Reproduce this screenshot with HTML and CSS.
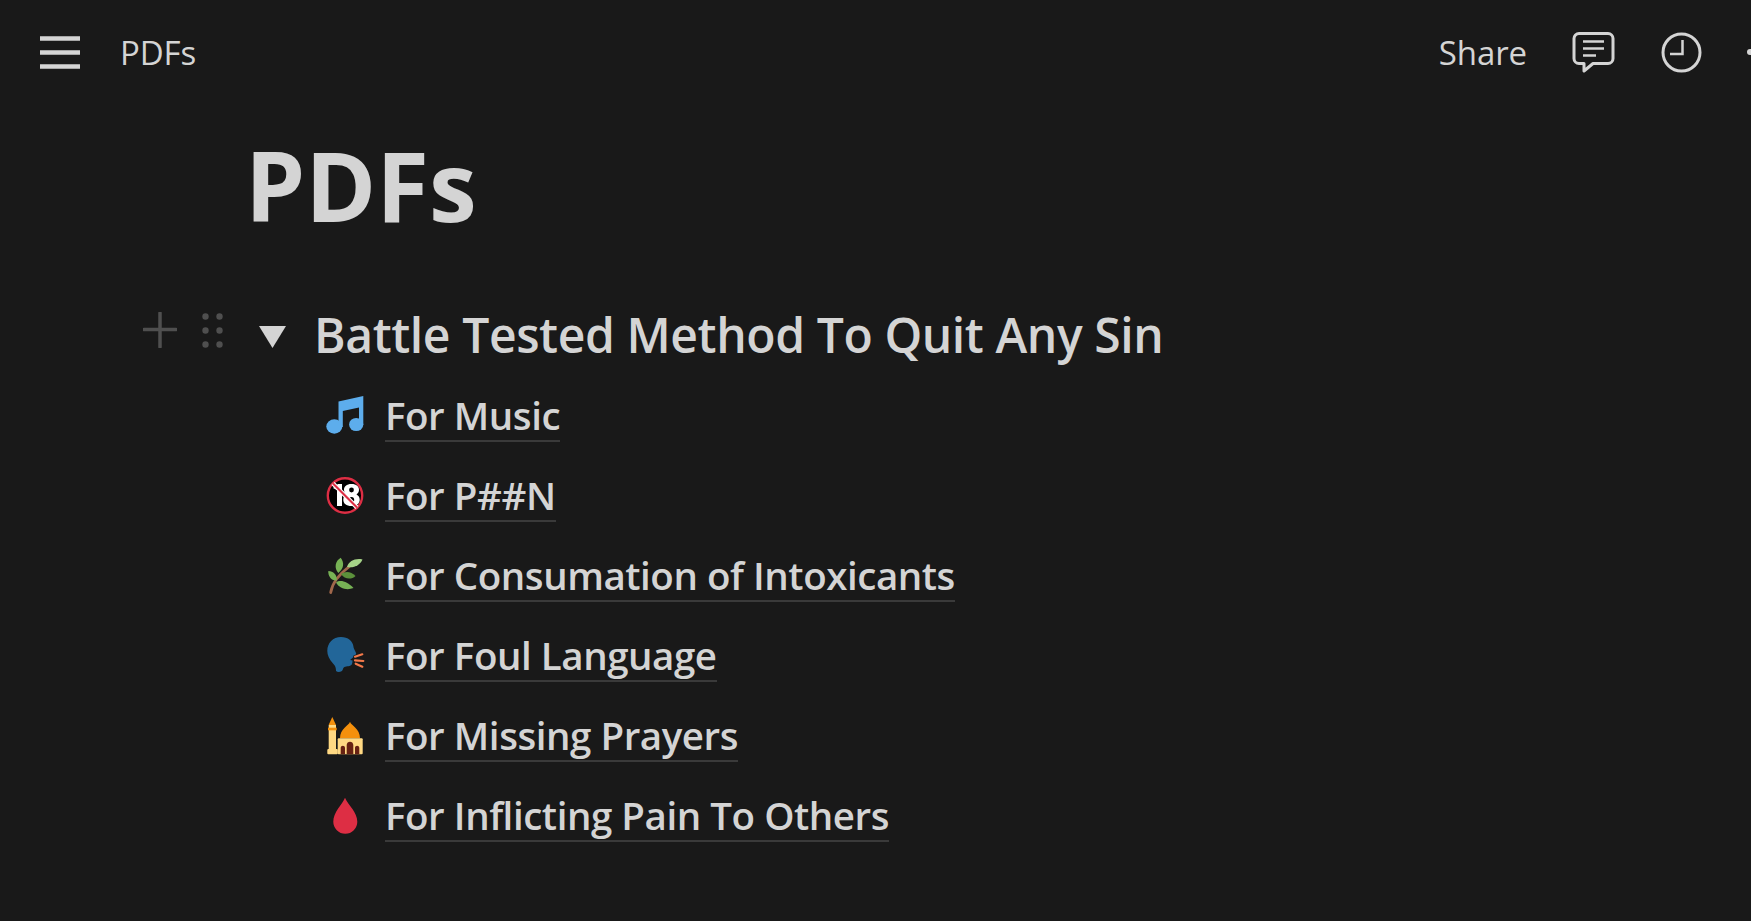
FILE: index.html

```html
<!DOCTYPE html>
<html lang="en">
<head>
    <meta charset="UTF-8">
    <meta name="viewport" content="width=device-width, initial-scale=1.0">
    <title>PDFs</title>
    <link rel="stylesheet" href="styles.css">
</head>
<body>
    <header class="topbar">
        <div class="topbar-left">
            <svg class="menu-icon" width="40" height="33" viewBox="0 0 40 33"><path d="M0 2.500h40M0 16.500h40M0 30.500h40" stroke="#d4d4d4" stroke-width="4.500"/></svg>
            <span class="crumb">PDFs</span>
        </div>
        <div class="topbar-right">
            <span class="share">Share</span>
            <svg class="comment-icon" width="43" height="41" viewBox="0 0 43 41" fill="none" stroke="#d4d4d4"><path d="M7 1.500h29a5 5 0 0 1 5 5v20a5 5 0 0 1-5 5H21l-9 7.500v-7.500H7a5 5 0 0 1-5-5v-20a5 5 0 0 1 5-5z" stroke-width="3" stroke-linejoin="round"/><path d="M11 9.500h21M11 16.500h21M11 23.500h13" stroke-width="2.500"/></svg>
            <svg class="clock-icon" width="41" height="41" viewBox="0 0 41 41" fill="none" stroke="#d4d4d4"><circle cx="20.500" cy="20.500" r="18.500" stroke-width="3"/><path d="M21.500 8v14H9" stroke-width="2.500"/></svg>
            <svg class="more-icon" width="10" height="8" viewBox="0 0 10 8"><circle cx="4" cy="4" r="3" fill="#d4d4d4"/></svg>
        </div>
    </header>

    <main class="page">
        <h1 class="page-title">PDFs</h1>

        <div class="toggle-head">
            <svg class="plus-icon" width="34" height="36" viewBox="0 0 34 36"><path d="M17 1v34M1 17.500h32" stroke="#4f4f4f" stroke-width="3.500" stroke-linecap="round"/></svg>
            <svg class="drag-icon" width="21" height="35" viewBox="0 0 21 35" fill="#4f4f4f"><circle cx="3.500" cy="3.500" r="3.200"/><circle cx="17.500" cy="3.500" r="3.200"/><circle cx="3.500" cy="17.500" r="3.200"/><circle cx="17.500" cy="17.500" r="3.200"/><circle cx="3.500" cy="31.500" r="3.200"/><circle cx="17.500" cy="31.500" r="3.200"/></svg>
            <svg class="toggle-icon" width="27" height="22" viewBox="0 0 27 22"><path d="M0 0h27L13.500 22z" fill="#d4d4d4"/></svg>
            <h2 class="toggle-title">Battle Tested Method To Quit Any Sin</h2>
        </div>

        <ul class="pages">
            <li class="page-link">
                <svg class="emoji" width="40" height="40" viewBox="0 0 40 40" fill="#5dadec"><path d="M13.500 5.500 38.300 0v29H34V11.500L17.800 15v16h-4.300z"/><ellipse cx="9.300" cy="30.500" rx="8" ry="7.200"/><ellipse cx="31.200" cy="28.500" rx="7.100" ry="6.600"/></svg>
                <a class="link-text">For Music</a>
            </li>
            <li class="page-link">
                <svg class="emoji" width="40" height="40" viewBox="0 0 40 40"><circle cx="20" cy="19.500" r="17.200" fill="#000" stroke="#dd2e44" stroke-width="2.400"/><path d="M8 12l5-4h4v22h-5V14z" fill="#fff"/><path d="M26.500 8c-5 0-7.500 2.500-7.500 5.800 0 2.200 1 3.700 2.500 4.700-2 1-3.200 2.800-3.200 5.200 0 3.800 3 6.300 8.200 6.300s8.200-2.500 8.200-6.300c0-2.400-1.200-4.200-3.200-5.200 1.500-1 2.500-2.500 2.500-4.700C34 10.500 31.500 8 26.500 8z" fill="#fff"/><ellipse cx="26.500" cy="14" rx="2.400" ry="2.400" fill="#000"/><ellipse cx="26.500" cy="24" rx="2.700" ry="3" fill="#000"/><path d="M8 7.500l24 24" stroke="#fff" stroke-width="4.500"/><path d="M8 7.500l24 24" stroke="#dd2e44" stroke-width="2.200"/></svg>
                <a class="link-text">For P##N</a>
            </li>
            <li class="page-link">
                <svg class="emoji" width="40" height="40" viewBox="0 0 40 40"><path d="M5.700 36.500C7 28 13 19 25 10" fill="none" stroke="#a0674b" stroke-width="2.800" stroke-linecap="round"/><path d="M13.300 17C9 12 10 5 15.700 1.700c4 5 3 11-2.400 15.300z" fill="#77b255"/><path d="M22 11c2-6 8-9 15.500-7.500C35 9 29 12.500 22 11z" fill="#a6d388"/><path d="M16 18c4-3 10-3 14.500 2-4 4-11 3.500-14.500-2z" fill="#5c913b"/><path d="M11 26.500c4-3 11-1.500 17.500 5.500-6 2.500-14 1-17.500-5.500z" fill="#77b255"/><path d="M11.800 24.500C6 25 3 20 3.300 15c5 0 9 4 8.500 9.500z" fill="#77b255"/></svg>
                <a class="link-text">For Consumation of Intoxicants</a>
            </li>
            <li class="page-link">
                <svg class="emoji" width="40" height="40" viewBox="0 0 40 40"><path d="M16 1c7 0 12 4 12.500 10 .2 2 3 6 2.700 7-.3 1-2 1-2.700 1.500l-.5 2-3 2.500 2.500.5c0 3-.5 5-3 5.500-3 .5-6 .5-6.500 3-.5 3-5 4-7 2 0-3-.5-5-3-7.500C4 23 2.300 19 2.300 15 2.300 7 8 1 16 1z" fill="#226699"/><path d="M30 20.700l7.300-2.400M30 24.300l8.300.7M30.700 27.700l6.600 3" stroke="#f4794a" stroke-width="2.200" stroke-linecap="round" fill="none"/></svg>
                <a class="link-text">For Foul Language</a>
            </li>
            <li class="page-link">
                <svg class="emoji" width="40" height="40" viewBox="0 0 40 40"><path d="M7.300 1l3.700 8H3.600z" fill="#f4900c"/><rect x="3.700" y="9" width="7.300" height="25" fill="#ffd983"/><rect x="2.300" y="33" width="10.500" height="5.300" rx="1" fill="#ffd983"/><rect x="3" y="11.700" width="8.700" height="2.600" fill="#f4900c"/><path d="M25 5.700c1 4 10 6.500 10 16.600H15C15 12.200 24 9.700 25 5.700z" fill="#f4900c"/><rect x="12.700" y="22.300" width="25" height="16" rx="1" fill="#ffd983"/><path d="M21.700 38.300V29c0-4.500 6.600-4.500 6.600 0v9.300zM15.700 38.300V32c0-3 4.300-3 4.300 0v6.300zM30 38.300V32c0-3 4.300-3 4.300 0v6.300z" fill="#662113"/></svg>
                <a class="link-text">For Missing Prayers</a>
            </li>
            <li class="page-link">
                <svg class="emoji" width="40" height="40" viewBox="0 0 40 40"><path d="M20 1.700C23 9 32.300 16 32.300 25.700a12 12 0 0 1-24 0C8.300 16 17 9 20 1.700z" fill="#dd2e44"/></svg>
                <a class="link-text">For Inflicting Pain To Others</a>
            </li>
        </ul>
    </main>
</body>
</html>
```

FILE: styles.css

```css
html, body {
    height: 100%;
}
body {
    margin: 0;
    background-color: #191919;
    color: #d4d4d4;
    font-family: "Open Sans", sans-serif;
    overflow: hidden;
}
.topbar {
    display: flex;
    justify-content: space-between;
    align-items: center;
    height: 104px;
    padding-left: 40px;
}
.topbar-left {
    display: flex;
    align-items: center;
    gap: 40px;
}
.topbar-right {
    display: flex;
    align-items: center;
    margin-right: -5px;
}
.crumb,
.share {
    font-size: 33px;
    letter-spacing: -0.1px;
}
.share {
    margin-right: 45px;
}
.comment-icon {
    margin-right: 46px;
}
.clock-icon {
    margin-right: 44px;
}
.page {
    padding-left: 143px;
}
.page-title {
    margin: 23px 0 0 102px;
    font-size: 96px;
    line-height: 116px;
    font-weight: 700;
}
.toggle-head {
    display: flex;
    align-items: center;
    margin-top: 59px;
    height: 64px;
}
.plus-icon {
    margin: 0 25px 8px 0;
}
.drag-icon {
    margin: 0 36px 8px 0;
}
.toggle-icon {
    margin: 6px 28px 0 0;
}
.toggle-title {
    margin: 0;
    font-size: 48px;
    font-weight: 600;
    letter-spacing: -0.4px;
}
.pages {
    list-style: none;
    margin: 10px 0 0 182px;
    padding: 0;
}
.page-link {
    display: flex;
    align-items: center;
    height: 80px;
    gap: 20px;
}
.emoji {
    flex: none;
}
.link-text {
    font-size: 38.5px;
    font-weight: 600;
    line-height: 50px;
    letter-spacing: -0.45px;
    border-bottom: 2px solid #3a3a3a;
}
```
